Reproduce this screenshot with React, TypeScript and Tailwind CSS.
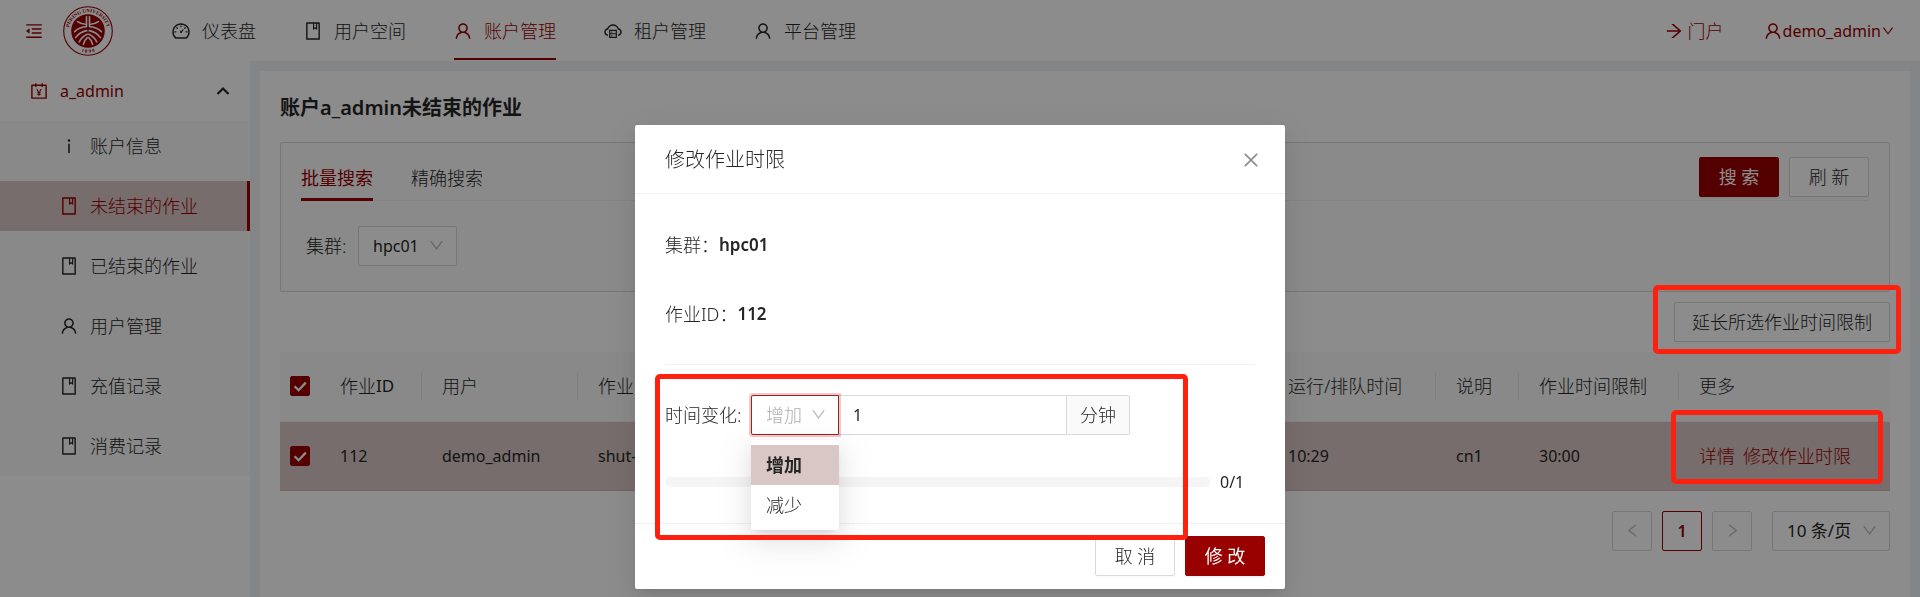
import React, { useState } from "react";
import type { ReactNode } from "react";
import type { IconType } from "react-icons";
import {
  AiOutlineAccountBook,
  AiOutlineArrowRight,
  AiOutlineBook,
  AiOutlineClose,
  AiOutlineCloudServer,
  AiOutlineDashboard,
  AiOutlineDown,
  AiOutlineInfo,
  AiOutlineLeft,
  AiOutlineMenuFold,
  AiOutlineRight,
  AiOutlineUser,
} from "react-icons/ai";

const navItems: { label: string; icon: IconType; active?: boolean }[] = [
  { label: "仪表盘", icon: AiOutlineDashboard },
  { label: "用户空间", icon: AiOutlineBook },
  { label: "账户管理", icon: AiOutlineUser, active: true },
  { label: "租户管理", icon: AiOutlineCloudServer },
  { label: "平台管理", icon: AiOutlineUser },
];

const sideItems: { label: string; icon: IconType; active?: boolean }[] = [
  { label: "账户信息", icon: AiOutlineInfo },
  { label: "未结束的作业", icon: AiOutlineBook, active: true },
  { label: "已结束的作业", icon: AiOutlineBook },
  { label: "用户管理", icon: AiOutlineUser },
  { label: "充值记录", icon: AiOutlineBook },
  { label: "消费记录", icon: AiOutlineBook },
];

function Logo() {
  const half = (
    <g fill="none" stroke="#fff" strokeWidth="1.6" strokeLinecap="round">
      <path d="M23.5 10.8V20.4" />
      <path d="M23.4 18.2C20.4 18.4 17 17.4 14.6 15.6" />
      <path d="M23.2 20.8C19.6 20.8 15 22.6 11.6 25.6" />
      <path d="M23.8 24.6C19.8 25.4 15.2 28 12.6 31.6" />
      <path d="M24.2 28.2C20.8 29.6 17.8 32.6 16.2 36" />
      <path d="M24.4 31.6C22.6 33 21 35.4 20.4 38.4" />
    </g>
  );
  return (
    <svg viewBox="0 0 50 50" className="size-[50px] shrink-0" aria-hidden="true">
      <circle cx="25" cy="25" r="24.3" fill="none" stroke="#990000" strokeWidth="1.1" />
      <circle cx="25" cy="25" r="16.8" fill="#990000" />
      <defs>
        <path id="ring-top" d="M6.8 32.4A19.4 19.4 0 1 1 43.2 32.4" />
        <path id="ring-bottom" d="M12 42.6A22.6 22.6 0 0 0 38 42.6" />
      </defs>
      <text fill="#990000" fontSize="5" fontWeight="700" fontFamily="Liberation Serif, serif">
        <textPath href="#ring-top" startOffset="50%" textAnchor="middle">
          PEKING UNIVERSITY
        </textPath>
      </text>
      <text fill="#990000" fontSize="5" fontWeight="700" fontFamily="Liberation Serif, serif">
        <textPath href="#ring-bottom" startOffset="50%" textAnchor="middle">
          1 8 9 8
        </textPath>
      </text>
      {half}
      <g transform="translate(50 0) scale(-1 1)">{half}</g>
    </svg>
  );
}

function Header() {
  return (
    <header className="flex h-[61px] shrink-0 items-center bg-white pr-[25px] pl-6">
      <button type="button" aria-label="收起菜单" className="mr-[19px] text-[#990000]">
        <AiOutlineMenuFold className="size-5" />
      </button>
      <Logo />
      <nav className="ml-[59px] flex h-full gap-12">
        {navItems.map(({ label, icon: Icon, active }) => (
          <a
            key={label}
            href="#"
            className={
              active
                ? "mb-px flex items-center gap-[11px] border-b-2 border-[#990000] pt-[3px] text-[#990000]"
                : "mb-px flex items-center gap-[11px] border-b-2 border-transparent pt-[3px]"
            }
          >
            <Icon className="-ml-px size-5" />
            {label}
          </a>
        ))}
      </nav>
      <div className="ml-auto flex items-center gap-[39px] text-[#990000]">
        <a href="#" className="flex items-center gap-1">
          <AiOutlineArrowRight className="size-5" />
          门户
        </a>
        <a href="#" className="flex items-center">
          <AiOutlineUser className="size-5" />
          <span className="text-base font-normal">demo_admin</span>
          <AiOutlineDown className="size-[14px]" />
        </a>
      </div>
    </header>
  );
}

function Sidebar() {
  return (
    <aside className="w-[250px] shrink-0 bg-white">
      <button type="button" className="flex h-[60px] w-full items-center gap-[11px] pr-5 pl-[29px] text-[#990000]">
        <AiOutlineAccountBook className="size-5" />
        <span className="text-base font-normal">a_admin</span>
        <svg viewBox="0 0 14 14" className="ml-auto size-[14px]" aria-hidden="true">
          <path d="M1.5 10 7 4.5 12.5 10" fill="none" stroke="#262626" strokeWidth="2.2" />
        </svg>
      </button>
      <ul className="flex flex-col gap-[10px] bg-[#fafafa] pb-[5px]">
        {sideItems.map(({ label, icon: Icon, active }) => (
          <li key={label}>
            <a
              href="#"
              className={
                active
                  ? "flex h-[50px] items-center gap-[11px] border-r-3 border-[#990000] bg-[#d9c7c5] pl-[59px] text-[#990000]"
                  : "flex h-[50px] items-center gap-[11px] pl-[59px]"
              }
            >
              <Icon className="size-5" />
              {label}
            </a>
          </li>
        ))}
      </ul>
    </aside>
  );
}

function Button({ primary, children }: { primary?: boolean; children: ReactNode }) {
  return (
    <button
      type="button"
      className={
        primary
          ? "h-10 min-w-20 rounded-[2px] border border-[#990000] bg-[#990000] px-[17px] font-normal text-white shadow-[0_2px_0_rgba(0,0,0,0.04)]"
          : "h-10 min-w-20 rounded-[2px] border border-[#d9d9d9] bg-white px-[17px] shadow-[0_2px_0_rgba(0,0,0,0.016)]"
      }
    >
      {children}
    </button>
  );
}

function Checkbox({ label }: { label: string }) {
  const [checked, setChecked] = useState(true);
  return (
    <label className="relative mx-auto block size-5">
      <input
        type="checkbox"
        aria-label={label}
        checked={checked}
        onChange={() => setChecked(!checked)}
        className="block size-5 appearance-none rounded-[2px] border border-[#d9d9d9] bg-white checked:border-[#990000] checked:bg-[#990000]"
      />
      {checked && (
        <svg viewBox="0 0 20 20" className="pointer-events-none absolute inset-0" aria-hidden="true">
          <path d="M4.6 10.2 8.6 14.2 15.8 6.6" fill="none" stroke="#fff" strokeWidth="2.3" />
        </svg>
      )}
    </label>
  );
}

function SearchPanel() {
  return (
    <section className="h-[150px] rounded-[2px] border border-[#d9d9d9] bg-[#fbfbfb] px-5 pt-[14px]">
      <div className="flex h-11 justify-between border-b border-[#f0f0f0]">
        <div role="tablist" className="flex gap-[38px]">
          <button type="button" role="tab" aria-selected="true" className="-mb-px border-b-3 border-[#990000] font-normal text-[#990000]">
            批量搜索
          </button>
          <button type="button" role="tab" aria-selected="false" className="-mb-px border-b-3 border-transparent">
            精确搜索
          </button>
        </div>
        <div className="flex gap-[10px]">
          <Button primary>搜 索</Button>
          <Button>刷 新</Button>
        </div>
      </div>
      <div className="flex items-center pt-[25px] pl-[5px]">
        <label htmlFor="cluster" className="w-[52px]">
          集群:
        </label>
        <div className="relative">
          <select
            id="cluster"
            className="h-10 w-[99px] appearance-none rounded-[2px] border border-[#d9d9d9] bg-white pl-[14px] text-base font-normal"
          >
            <option>hpc01</option>
          </select>
          <AiOutlineDown className="pointer-events-none absolute top-[11px] right-3 size-[17px] text-[#bfbfbf]" />
        </div>
      </div>
    </section>
  );
}

function HeadCell({ children, last }: { children: ReactNode; last?: boolean }) {
  return (
    <th className="h-[69px] border-b border-[#f0f0f0] p-0 text-left font-light">
      <div
        className={
          last ? "flex h-7 items-center pl-5" : "flex h-7 items-center border-r border-[#e8e8e8] pl-5"
        }
      >
        {children}
      </div>
    </th>
  );
}

function JobTable() {
  return (
    <table className="w-full table-fixed border-collapse whitespace-nowrap">
      <colgroup>
        <col className="w-10" />
        <col className="w-[102px]" />
        <col className="w-[156px]" />
        <col />
        <col className="w-[168px]" />
        <col className="w-[83px]" />
        <col className="w-[160px]" />
        <col className="w-[211px]" />
      </colgroup>
      <thead className="bg-[#fafafa]">
        <tr>
          <th className="border-b border-[#f0f0f0] p-0">
            <Checkbox label="全选" />
          </th>
          <HeadCell>
            作业<span className="text-[17px] font-normal">ID</span>
          </HeadCell>
          <HeadCell>用户</HeadCell>
          <HeadCell>作业名</HeadCell>
          <HeadCell>运行/排队时间</HeadCell>
          <HeadCell>说明</HeadCell>
          <HeadCell>作业时间限制</HeadCell>
          <HeadCell last>更多</HeadCell>
        </tr>
      </thead>
      <tbody>
        <tr className="h-[69px] border-b border-[#ccb6b4] bg-[#d9c7c5] text-base font-normal">
          <td>
            <Checkbox label="选择作业 112" />
          </td>
          <td className="pl-5">112</td>
          <td className="pl-5">demo_admin</td>
          <td className="pl-5">shut-</td>
          <td className="pl-5">10:29</td>
          <td className="pl-5">cn1</td>
          <td className="pl-5">30:00</td>
          <td className="pl-5">
            <div className="flex gap-2 text-lg font-light text-[#990000]">
              <a href="#">详情</a>
              <a href="#">修改作业时限</a>
            </div>
          </td>
        </tr>
      </tbody>
    </table>
  );
}

function Pagination() {
  return (
    <nav aria-label="分页" className="mt-5 flex justify-end gap-[10px] text-base">
      <button
        type="button"
        aria-label="上一页"
        className="flex size-10 items-center justify-center rounded-[2px] border border-[#d9d9d9] text-[#bfbfbf]"
      >
        <AiOutlineLeft className="size-[17px]" />
      </button>
      <button type="button" className="size-10 rounded-[2px] border border-[#990000] font-semibold text-[#990000]">
        1
      </button>
      <button
        type="button"
        aria-label="下一页"
        className="flex size-10 items-center justify-center rounded-[2px] border border-[#d9d9d9] text-[#bfbfbf]"
      >
        <AiOutlineRight className="size-[17px]" />
      </button>
      <div className="relative ml-[10px]">
        <select
          aria-label="每页条数"
          className="h-10 w-[118px] appearance-none rounded-[2px] border border-[#d9d9d9] bg-white pl-[14px] text-[17px] font-normal"
        >
          <option>10 条/页</option>
        </select>
        <AiOutlineDown className="pointer-events-none absolute top-[11px] right-3 size-[17px] text-[#bfbfbf]" />
      </div>
    </nav>
  );
}

function Highlight({ className }: { className: string }) {
  return <div className={`pointer-events-none absolute rounded-[5px] border-5 border-[#ff2010] ${className}`} />;
}

function Modal() {
  const [minutes, setMinutes] = useState("1");
  return (
    <div
      role="dialog"
      aria-labelledby="dialog-title"
      className="relative w-[650px] rounded-[2px] bg-white shadow-[0_4px_8px_-5px_rgba(0,0,0,0.12),0_8px_20px_rgba(0,0,0,0.08),0_11px_35px_10px_rgba(0,0,0,0.05)]"
    >
      <div className="flex h-[69px] items-center justify-between border-b border-[#f0f0f0] pt-0.5 pr-6 pl-[30px]">
        <h2 id="dialog-title" className="text-xl">
          修改作业时限
        </h2>
        <button type="button" aria-label="关闭" className="text-[#8c8c8c]">
          <AiOutlineClose className="size-5" />
        </button>
      </div>
      <div className="px-[30px]">
        <div className="flex h-[100px] items-center pt-0.5">
          集群：<strong className="text-[17px] font-semibold">hpc01</strong>
        </div>
        <div className="flex h-10 items-center">
          作业ID：<strong className="text-[17px] font-semibold">112</strong>
        </div>
        <hr className="mt-[30px] border-[#f0f0f0]" />
        <div className="mt-[30px] flex items-center">
          <label htmlFor="minutes" className="w-[86px] whitespace-nowrap">
            时间变化:
          </label>
          <div className="relative">
            <select
              aria-label="变化方式"
              className="block h-10 w-[88px] appearance-none rounded-l-[2px] border border-[#a81c1c] bg-white pl-[14px] text-[#b0b0b0] shadow-[0_0_0_2px_rgba(153,0,0,0.2)]"
            >
              <option>增加</option>
              <option>减少</option>
            </select>
            <AiOutlineDown className="pointer-events-none absolute top-[11px] right-3 size-[17px] text-[#bfbfbf]" />
            <ul
              role="listbox"
              aria-label="变化方式"
              className="absolute top-[45px] left-0 z-10 w-[88px] rounded-[2px] bg-white py-[5px] shadow-[0_4px_8px_-5px_rgba(0,0,0,0.12),0_8px_20px_rgba(0,0,0,0.08),0_11px_35px_10px_rgba(0,0,0,0.05)]"
            >
              <li role="option" aria-selected="true" className="flex h-10 items-center bg-[#d9c7c5] pl-[15px] font-semibold">
                增加
              </li>
              <li role="option" aria-selected="false" className="flex h-10 items-center pl-[15px]">
                减少
              </li>
            </ul>
          </div>
          <input
            id="minutes"
            value={minutes}
            onChange={(e) => setMinutes(e.target.value)}
            className="h-10 w-[227px] border-y border-[#d9d9d9] pl-[14px] text-base font-normal outline-none"
          />
          <span className="flex h-10 items-center rounded-r-[2px] border border-[#d9d9d9] bg-[#fafafa] px-[13px]">
            分钟
          </span>
        </div>
        <div className="mt-[34px] flex h-[26px] items-center gap-[10px]">
          <div
            role="progressbar"
            aria-label="进度"
            aria-valuenow={0}
            aria-valuemax={1}
            className="h-[10px] flex-1 rounded-full bg-[#f5f5f5]"
          />
          <span className="w-[35px] text-base font-normal">0/1</span>
        </div>
      </div>
      <div className="mt-7 flex justify-end gap-[10px] border-t border-[#f0f0f0] px-5 pt-3 pb-[13px]">
        <Button>取 消</Button>
        <Button primary>修 改</Button>
      </div>
      <Highlight className="top-[249px] left-5 z-20 h-[166px] w-[533px]" />
    </div>
  );
}

export default function App() {
  return (
    <div className="flex min-h-screen flex-col bg-[#f0f2f5] font-['Noto_Sans','Noto_Sans_CJK_SC',sans-serif] text-lg leading-7 font-light text-[#262626]">
      <Header />
      <div className="flex flex-1">
        <Sidebar />
        <main className="mt-[10px] mr-[10px] ml-[10px] min-w-0 flex-1 bg-white px-5 pt-[22px]">
          <h1 className="mb-[19px] text-xl leading-[30px] font-semibold">账户a_admin未结束的作业</h1>
          <SearchPanel />
          <div className="relative mt-[10px] mb-[10px] flex justify-end">
            <Button>延长所选作业时间限制</Button>
            <Highlight className="-top-[17px] -right-[11px] z-20 h-[69px] w-[248px]" />
          </div>
          <div className="relative">
            <JobTable />
            <Highlight className="top-[58px] right-[7px] z-20 h-[74px] w-[212px]" />
          </div>
          <Pagination />
        </main>
      </div>
      <div className="fixed inset-0 z-10 flex items-start justify-center bg-black/45 pt-[125px]">
        <Modal />
      </div>
    </div>
  );
}
